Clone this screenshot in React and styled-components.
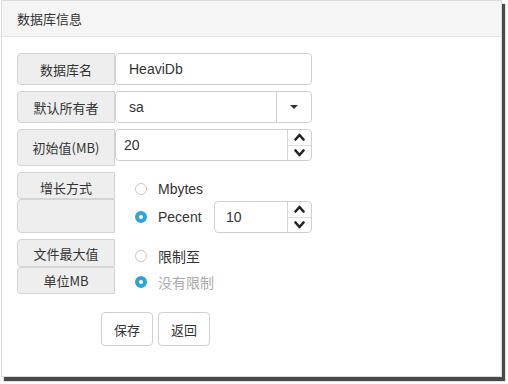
import React from "react";
import styled, { createGlobalStyle } from "styled-components";

const GlobalStyle = createGlobalStyle`
  html, body {
    margin: 0;
    padding: 0;
    background: #ffffff;
  }
  body {
    font-family: "Liberation Sans", "Noto Sans CJK SC", Arial, sans-serif;
    color: #333;
  }
`;

const Screen = styled.div`
  width: 508px;
  height: 384px;
  overflow: hidden;
  background: #fff;
`;

const Frame = styled.div`
  width: 501px;
  height: 377px;
  margin-left: 1px;
  box-sizing: border-box;
  border: 1px solid #dcdcdc;
  background: #fff;
  box-shadow: 3px 4px 1px #4a4a4a;
  display: flex;
  flex-direction: column;
`;

const Header = styled.div`
  height: 36px;
  flex-shrink: 0;
  box-sizing: border-box;
  background: #f5f5f5;
  border-bottom: 1px solid #e3e3e3;
  padding-left: 15px;
  display: flex;
  align-items: center;
  font-size: 13px;
  font-family: "Noto Sans CJK SC", sans-serif;
  color: #333;
`;

const Body = styled.div`
  padding: 16px 0 0 15px;
  display: flex;
  flex-direction: column;
`;

const Row = styled.div`
  display: flex;
  align-items: flex-start;
  margin-bottom: 6px;
`;

const Label = styled.div`
  width: 98px;
  height: ${(p) => p.$h || 32}px;
  box-sizing: border-box;
  background: #eeeeee;
  border: 1px solid #d4d4d4;
  border-radius: 4px 0 0 4px;
  display: flex;
  align-items: ${(p) => (p.$top ? "flex-start" : "center")};
  padding-top: ${(p) => (p.$top ? "5px" : "0")};
  justify-content: center;
  font-size: 13px;
  font-family: "Noto Sans CJK SC", sans-serif;
  color: #333;
`;

const Field = styled.div`
  width: ${(p) => p.$w || 197}px;
  height: 32px;
  box-sizing: border-box;
  border: 1px solid #d0d0d0;
  border-radius: 4px;
  display: flex;
  align-items: stretch;
  background: #fff;
`;

const Value = styled.div`
  flex: 1;
  display: flex;
  align-items: center;
  padding-left: ${(p) => p.$pad || 13}px;
  font-size: 14px;
  color: #333;
`;

const Caret = styled.div`
  width: 34px;
  border-left: 1px solid #d0d0d0;
  display: flex;
  align-items: center;
  justify-content: center;
  &::after {
    content: "";
    border-left: 4px solid transparent;
    border-right: 4px solid transparent;
    border-top: 4px solid #333;
  }
`;

const Spinner = styled.div`
  width: 23px;
  border-left: 1px solid #d6d6d6;
  display: flex;
  flex-direction: column;
`;

const SpinHalf = styled.div`
  flex: 1;
  display: flex;
  align-items: center;
  justify-content: center;
  & + & {
    border-top: 1px solid #e0e0e0;
  }
`;

const Growth = styled.div`
  display: grid;
  grid-template-columns: 98px 1fr;
`;

const LabelStack = styled.div`
  display: flex;
  flex-direction: column;
`;

const Gap = styled.div`
  height: 6px;
`;

const Options = styled.div`
  display: flex;
  flex-direction: column;
  padding: 5px 0 0 20px;
`;

const Option = styled.div`
  display: flex;
  align-items: center;
  height: ${(p) => p.$h || 26}px;
  margin-top: ${(p) => p.$mt || 0}px;
  font-size: 14px;
  color: ${(p) => (p.$muted ? "#aaa" : "#333")};
  font-family: ${(p) =>
    p.$cjk ? '"Noto Sans CJK SC", sans-serif' : '"Liberation Sans", sans-serif'};
`;

const Radio = styled.span`
  width: 12px;
  height: 12px;
  box-sizing: border-box;
  border-radius: 50%;
  border: ${(p) => (p.$on ? "4px solid #2fa4d9" : "1px solid #c8c8c8")};
  background: #fff;
  margin-right: 11px;
  flex-shrink: 0;
`;

const OptionText = styled.span`
  width: ${(p) => p.$w || "auto"};
`;

const Actions = styled.div`
  display: flex;
  gap: 5px;
  margin: 17px 0 0 84px;
`;

const Button = styled.button`
  width: 52px;
  height: 34px;
  box-sizing: border-box;
  border: 1px solid #d0d0d0;
  border-radius: 4px;
  background: #fff;
  font-size: 13px;
  font-family: "Noto Sans CJK SC", sans-serif;
  color: #333;
  padding: 0;
`;

const Chevron = ({ up }) => (
  <svg width="11" height="8" viewBox="0 0 11 8">
    <path
      d={up ? "M1.5 6.5 L5.5 2 L9.5 6.5" : "M1.5 1.5 L5.5 6 L9.5 1.5"}
      fill="none"
      stroke="#222"
      strokeWidth="2.6"
      strokeLinecap="round"
      strokeLinejoin="round"
    />
  </svg>
);

const NumberField = ({ value, width }) => (
  <Field $w={width}>
    <Value $pad={width ? 11 : 8}>{value}</Value>
    <Spinner>
      <SpinHalf>
        <Chevron up />
      </SpinHalf>
      <SpinHalf>
        <Chevron />
      </SpinHalf>
    </Spinner>
  </Field>
);

export default function App() {
  return (
    <Screen>
      <GlobalStyle />
      <Frame>
        <Header>数据库信息</Header>
        <Body>
          <Row>
            <Label>数据库名</Label>
            <Field>
              <Value>HeaviDb</Value>
            </Field>
          </Row>
          <Row>
            <Label>默认所有者</Label>
            <Field>
              <Value>sa</Value>
              <Caret />
            </Field>
          </Row>
          <Row>
            <Label $h={37}>初始值(MB)</Label>
            <NumberField value="20" />
          </Row>
          <Growth>
            <LabelStack>
              <Label $h={27} $top>增长方式</Label>
              <Label $h={34} />
              <Gap />
              <Label $h={28}>文件最大值</Label>
              <Label $h={27}>单位MB</Label>
            </LabelStack>
            <Options>
              <Option $h={24}>
                <Radio />
                Mbytes
              </Option>
              <Option $h={32}>
                <Radio $on />
                <OptionText $w="56px">Pecent</OptionText>
                <NumberField value="10" width={98} />
              </Option>
              <Option $mt={10} $cjk>
                <Radio />
                限制至
              </Option>
              <Option $cjk $muted>
                <Radio $on />
                没有限制
              </Option>
            </Options>
          </Growth>
          <Actions>
            <Button>保存</Button>
            <Button>返回</Button>
          </Actions>
        </Body>
      </Frame>
    </Screen>
  );
}
